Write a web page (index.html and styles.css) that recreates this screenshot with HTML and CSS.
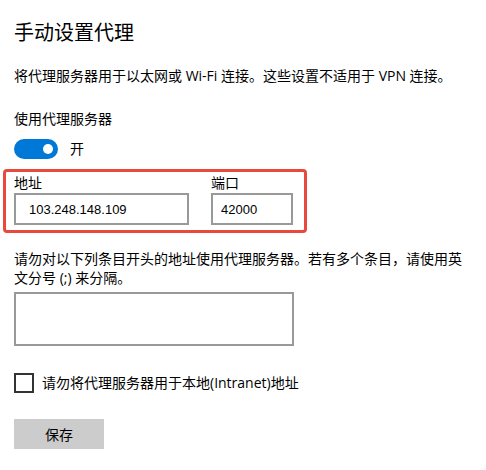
FILE: index.html
```html
<!DOCTYPE html>
<html lang="zh-CN">
<head>
    <meta charset="UTF-8">
    <title>手动设置代理</title>
    <link rel="stylesheet" href="styles.css">
</head>
<body>
    <main class="page">
        <h1 class="title">手动设置代理</h1>
        <p class="desc">将代理服务器用于以太网或 Wi-Fi 连接。这些设置不适用于 VPN 连接。</p>

        <div class="label">使用代理服务器</div>
        <div class="toggle-row">
            <span class="toggle"><span class="knob"></span></span>
            <span>开</span>
        </div>

        <!-- address + port, highlighted -->
        <div class="proxy-box">
            <div class="field field-addr">
                <label>地址</label>
                <input type="text" class="addr" value="103.248.148.109">
            </div>
            <div class="field field-port">
                <label>端口</label>
                <input type="text" class="port" value="42000">
            </div>
        </div>

        <p class="hint">请勿对以下列条目开头的地址使用代理服务器。若有多个条目，请使用英文分号 (;) 来分隔。</p>
        <textarea class="exceptions"></textarea>

        <label class="check-row">
            <span class="checkbox"></span>
            <span>请勿将代理服务器用于本地(Intranet)地址</span>
        </label>

        <button class="save">保存</button>
    </main>
</body>
</html>
```

FILE: styles.css
```css
body {
    margin: 0;
    background: #ffffff;
    color: #000000;
    font-family: "Open Sans", "Noto Sans CJK SC", sans-serif;
    font-size: 14px;
}

.page {
    padding: 0 14px;
}

.title {
    margin: 19px 0 0;
    font-size: 20px;
    font-weight: normal;
    line-height: 28px;
}

.desc {
    margin: 19px 0 0;
    line-height: 20px;
}

.label {
    margin-top: 23px;
    line-height: 20px;
}

/* toggle switch */
.toggle-row {
    display: flex;
    align-items: center;
    gap: 12px;
    margin-top: 10px;
    height: 20px;
    line-height: 20px;
}

.toggle {
    display: flex;
    align-items: center;
    justify-content: flex-end;
    width: 44px;
    height: 20px;
    padding-right: 5px;
    box-sizing: border-box;
    border-radius: 10px;
    background-color: #0078d7;
}

.knob {
    width: 10px;
    height: 10px;
    border-radius: 50%;
    background-color: #ffffff;
}

/* red highlight box */
.proxy-box {
    display: flex;
    gap: 22px;
    width: 304px;
    box-sizing: border-box;
    margin: 10px 0 0 -11px;
    padding: 1px 11px 5px 8px;
    border: 3px solid #e9483f;
    border-radius: 4px;
}

.field {
    display: flex;
    flex-direction: column;
}

.field label {
    line-height: 20px;
}

.field input {
    height: 32px;
    box-sizing: border-box;
    margin: 0;
    border: 2px solid #999999;
    font-family: "Liberation Sans", sans-serif;
    font-size: 13px;
    color: #000000;
    outline: none;
}

.addr {
    width: 175px;
    padding: 0 0 0 13px;
}

.port {
    width: 82px;
    padding: 0 0 0 8px;
}

.hint {
    margin: 16px 0 0;
    line-height: 19px;
}

.exceptions {
    display: block;
    width: 280px;
    height: 54px;
    box-sizing: border-box;
    margin-top: 5px;
    border: 2px solid #999999;
    resize: none;
    outline: none;
}

.check-row {
    display: flex;
    align-items: center;
    gap: 8px;
    margin-top: 27px;
    line-height: 20px;
}

.checkbox {
    width: 20px;
    height: 20px;
    box-sizing: border-box;
    border: 2px solid #333333;
}

.save {
    display: block;
    width: 90px;
    height: 30px;
    margin-top: 26px;
    border: none;
    background-color: #cccccc;
    color: #000000;
    font-family: inherit;
    font-size: 14px;
}
```
